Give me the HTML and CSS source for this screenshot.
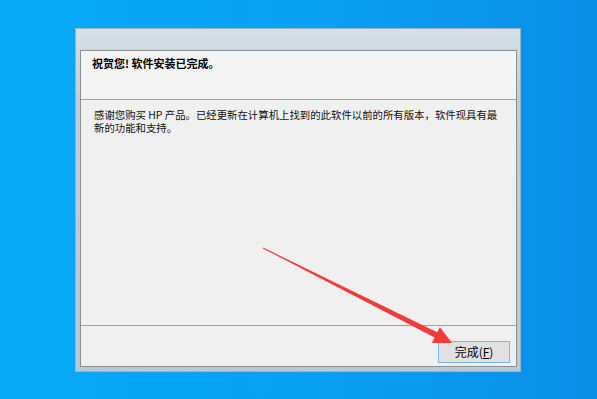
FILE: index.html
```html
<!DOCTYPE html>
<html lang="zh">
<head>
<meta charset="utf-8">
<link rel="stylesheet" href="styles.css">
</head>
<body>
<div class="desktop">
  <div class="window">
    <div class="panel">
      <div class="header">祝贺您! 软件安装已完成。</div>
      <div class="body">感谢您购买 HP 产品。已经更新在计算机上找到的此软件以前的所有版本，软件现具有最新的功能和支持。</div>
      <div class="footer">
        <button class="btn">完成(<u>F</u>)</button>
      </div>
    </div>
  </div>
  <svg class="arrow" width="597" height="399" viewBox="0 0 597 399">
    <polygon points="263.2,247.6 437.2,332.2 439.9,326.9 452,343 431.9,342.9 434.6,337.6 262.8,248.4" fill="#f23b3b"/>
  </svg>
</div>
</body>
</html>
```
FILE: styles.css
```css
html, body {
  margin: 0;
  padding: 0;
}
body {
  width: 597px;
  height: 399px;
  overflow: hidden;
  font-family: "Noto Sans CJK SC", "Liberation Sans", sans-serif;
}
.desktop {
  position: relative;
  width: 597px;
  height: 399px;
  background: linear-gradient(to right, #07aaf6 0%, #08a2f2 50%, #0a8ee6 100%);
  padding: 28px 0 0 75px;
  box-sizing: border-box;
}
.window {
  width: 446px;
  height: 344px;
  box-sizing: border-box;
  padding: 21px 3px 4px 4px;
  background: linear-gradient(#d6dee7, #c3cdd9 20%, #bcc8d5);
  border: 1px solid #9fb0c2;
}
.panel {
  height: 100%;
  box-sizing: border-box;
  border: 1px solid #8b8f94;
  background: #f0f0f0;
  display: flex;
  flex-direction: column;
}
.header {
  height: 49px;
  box-sizing: border-box;
  padding: 4px 0 0 11px;
  font-size: 11px;
  font-weight: bold;
  color: #000;
  border-bottom: 1px solid #a0a0a0;
  background: #f4f4f4;
}
.body {
  flex: 1;
  padding: 9px 14px 0 13px;
  font-size: 10.4px;
  line-height: 12.5px;
  color: #111;
  border-bottom: 1px solid #a0a0a0;
}
.footer {
  height: 40px;
  display: flex;
  justify-content: flex-end;
  align-items: flex-start;
  padding: 15px 6px 0 0;
  box-sizing: border-box;
}
.btn {
  width: 72px;
  height: 22px;
  border: 1px solid #7fb4e8;
  background: #e1e1e1;
  font-family: "Noto Sans CJK SC", "Liberation Sans", sans-serif;
  font-size: 12px;
  color: #000;
  padding: 0;
  line-height: 20px;
}
.btn u {
  text-decoration: underline;
}
.arrow {
  position: absolute;
  left: 0;
  top: 0;
  pointer-events: none;
}
```
